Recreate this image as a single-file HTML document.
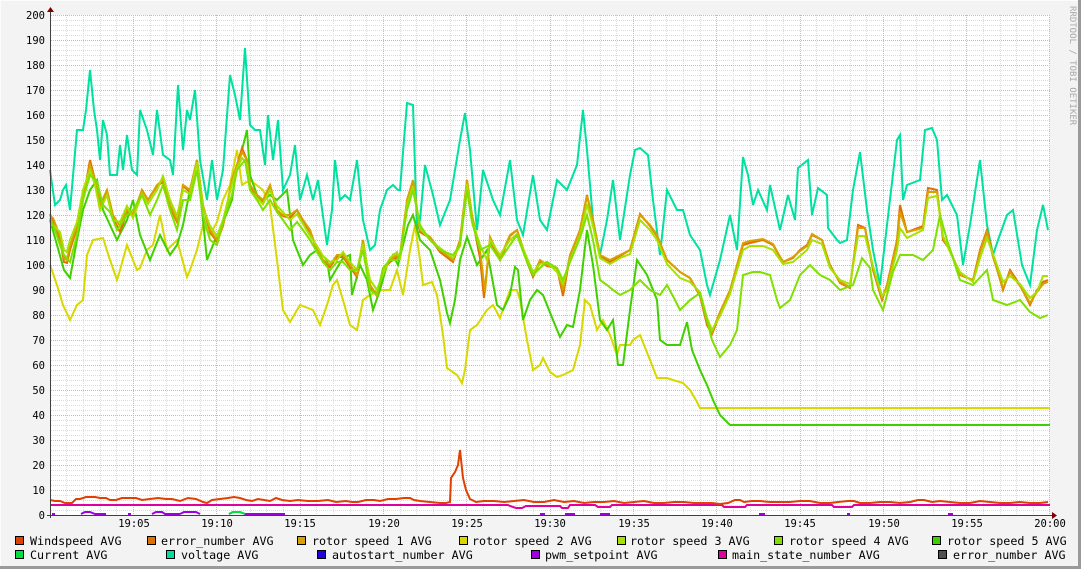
<!DOCTYPE html>
<html><head><meta charset="utf-8"><style>
html,body{margin:0;padding:0;}
body{width:1081px;height:569px;background:#f3f3f3;position:relative;overflow:hidden;font-family:"DejaVu Sans Mono","Liberation Mono",monospace;}
svg{position:absolute;left:0;top:0;}
</style></head><body>
<svg width="1081" height="569" viewBox="0 0 1081 569" xmlns="http://www.w3.org/2000/svg">
<defs>
<pattern id="hmin" x="0" y="0" width="1000" height="5" patternUnits="userSpaceOnUse"><line x1="0" y1="0.5" x2="1000" y2="0.5" stroke="#d8d8d8" stroke-width="1" stroke-dasharray="1,1"/></pattern>
</defs>
<rect x="0" y="0" width="1081" height="569" fill="#f3f3f3"/>
<line x1="0" y1="0.5" x2="1081" y2="0.5" stroke="#fcfcfc"/>
<line x1="0.5" y1="0" x2="0.5" y2="569" stroke="#fcfcfc"/>
<line x1="0" y1="567.5" x2="1081" y2="567.5" stroke="#9a9a9a" stroke-width="3"/>
<line x1="1079.5" y1="0" x2="1079.5" y2="569" stroke="#9a9a9a" stroke-width="3"/>
<rect x="51" y="15" width="999" height="500" fill="#ffffff"/>
<g id="grid" stroke-dasharray="1,1" stroke-width="1">
<g stroke="#dcdcdc">
<path d="M51 20.5H1050M51 25.5H1050M51 30.5H1050M51 35.5H1050M51 45.5H1050M51 50.5H1050M51 55.5H1050M51 60.5H1050M51 70.5H1050M51 75.5H1050M51 80.5H1050M51 85.5H1050M51 95.5H1050M51 100.5H1050M51 105.5H1050M51 110.5H1050M51 120.5H1050M51 125.5H1050M51 130.5H1050M51 135.5H1050M51 145.5H1050M51 150.5H1050M51 155.5H1050M51 160.5H1050M51 170.5H1050M51 175.5H1050M51 180.5H1050M51 185.5H1050M51 195.5H1050M51 200.5H1050M51 205.5H1050M51 210.5H1050M51 220.5H1050M51 225.5H1050M51 230.5H1050M51 235.5H1050M51 245.5H1050M51 250.5H1050M51 255.5H1050M51 260.5H1050M51 270.5H1050M51 275.5H1050M51 280.5H1050M51 285.5H1050M51 295.5H1050M51 300.5H1050M51 305.5H1050M51 310.5H1050M51 320.5H1050M51 325.5H1050M51 330.5H1050M51 335.5H1050M51 345.5H1050M51 350.5H1050M51 355.5H1050M51 360.5H1050M51 370.5H1050M51 375.5H1050M51 380.5H1050M51 385.5H1050M51 395.5H1050M51 400.5H1050M51 405.5H1050M51 410.5H1050M51 420.5H1050M51 425.5H1050M51 430.5H1050M51 435.5H1050M51 445.5H1050M51 450.5H1050M51 455.5H1050M51 460.5H1050M51 470.5H1050M51 475.5H1050M51 480.5H1050M51 485.5H1050M51 495.5H1050M51 500.5H1050M51 505.5H1050M51 510.5H1050"/>
<path d="M66.5 15V515M83.5 15V515M100.5 15V515M116.5 15V515M150.5 15V515M166.5 15V515M183.5 15V515M200.5 15V515M233.5 15V515M250.5 15V515M266.5 15V515M283.5 15V515M316.5 15V515M333.5 15V515M350.5 15V515M366.5 15V515M400.5 15V515M416.5 15V515M433.5 15V515M450.5 15V515M483.5 15V515M500.5 15V515M516.5 15V515M533.5 15V515M566.5 15V515M583.5 15V515M600.5 15V515M616.5 15V515M650.5 15V515M666.5 15V515M683.5 15V515M700.5 15V515M733.5 15V515M750.5 15V515M766.5 15V515M783.5 15V515M816.5 15V515M833.5 15V515M850.5 15V515M866.5 15V515M900.5 15V515M916.5 15V515M933.5 15V515M950.5 15V515M983.5 15V515M1000.5 15V515M1016.5 15V515M1033.5 15V515"/>
</g>
<g stroke="#f0a8a8">
<path d="M51 15.5H1050M51 40.5H1050M51 65.5H1050M51 90.5H1050M51 115.5H1050M51 140.5H1050M51 165.5H1050M51 190.5H1050M51 215.5H1050M51 240.5H1050M51 265.5H1050M51 290.5H1050M51 315.5H1050M51 340.5H1050M51 365.5H1050M51 390.5H1050M51 415.5H1050M51 440.5H1050M51 465.5H1050M51 490.5H1050"/>
<path d="M133.5 15V515M216.5 15V515M300.5 15V515M383.5 15V515M466.5 15V515M550.5 15V515M633.5 15V515M716.5 15V515M800.5 15V515M883.5 15V515M966.5 15V515M1049.5 15V515"/>
</g>
</g>
<g fill="none" stroke-width="2" stroke-linejoin="miter">
<!-- rotor speed 2 (yellow) -->
<polyline stroke="#d8d800" points="50,265 57,285 63,305 70,320 77,305 83,300 87,255 93,240 103,238 110,260 117,280 120,270 127,245 137,270 140,268 147,250 153,245 160,215 167,250 177,240 187,277 190,270 197,250 203,225 210,235 217,222 223,200 230,185 237,150 242,185 250,180 263,190 270,205 277,260 283,310 290,322 300,305 313,310 320,325 327,305 333,285 337,280 343,300 350,325 357,330 363,300 370,295 380,290 390,290 397,270 403,295 410,250 415,225 420,260 423,285 432,282 437,295 443,335 447,368 457,375 462,383 465,370 470,330 477,325 487,310 493,305 500,318 510,290 517,290 520,300 527,340 533,370 540,365 543,358 550,372 557,377 563,375 573,370 580,345 585,300 590,305 597,330 603,320 610,335 617,355 620,345 630,345 633,340 640,335 650,360 657,378 667,378 673,380 683,383 690,390 697,402 700,408 1050,408"/>
<!-- voltage -->
<polyline stroke="#00e0a0" points="50,170 55,205 60,200 63,190 66,185 70,210 77,130 83,130 86,110 90,70 94,110 97,130 100,160 103,120 107,135 110,175 117,175 120,145 123,170 127,135 132,170 137,175 140,110 147,130 153,155 157,110 163,155 170,160 173,175 178,85 183,150 187,110 190,120 195,90 200,160 207,200 212,160 217,200 223,170 230,75 235,95 240,120 245,48 250,125 255,130 260,130 265,165 268,115 273,160 278,120 283,190 290,175 295,145 300,200 307,175 313,200 318,180 327,245 332,210 335,160 340,200 345,195 350,200 357,160 363,220 370,250 375,245 380,210 387,190 393,185 398,190 400,190 404,140 407,103 413,105 417,230 420,220 425,165 433,195 440,225 450,200 460,140 465,113 470,150 477,230 483,170 493,200 500,215 510,160 517,220 523,235 533,175 540,220 547,230 557,180 567,190 577,165 583,110 587,150 593,220 600,255 607,220 613,180 620,240 630,175 635,150 640,148 648,155 653,200 660,255 667,190 677,210 683,210 690,235 700,250 707,285 710,295 720,260 730,215 737,250 743,157 748,175 753,205 758,190 767,210 770,185 780,230 788,195 795,220 798,168 808,160 812,215 818,188 827,195 828,228 837,240 840,243 847,240 853,190 860,152 867,210 873,250 880,285 887,225 897,140 900,135 903,200 907,185 920,180 925,130 932,128 937,140 942,200 947,195 957,215 963,265 970,225 980,160 987,225 993,255 998,240 1007,215 1013,210 1022,265 1030,285 1037,230 1043,205 1048,230"/>
<!-- rotor speed 5 (green) -->
<polyline stroke="#40d000" points="50,220 57,245 64,270 70,278 77,240 83,210 90,190 97,180 103,210 110,225 117,240 127,220 133,200 140,235 150,260 160,235 170,255 177,245 183,225 190,190 197,160 203,220 207,260 213,245 220,230 232,200 237,165 242,150 247,130 250,175 257,195 263,200 270,195 277,200 287,190 293,240 303,265 310,255 317,250 327,260 330,280 337,268 343,258 350,255 352,295 360,265 367,280 373,310 380,290 387,265 393,255 398,265 403,245 408,225 413,215 420,240 430,250 440,280 447,313 450,323 455,300 460,260 467,237 477,265 487,250 497,305 503,310 510,295 515,267 518,270 523,320 530,300 537,290 543,295 553,320 560,337 567,325 573,327 580,290 587,230 593,265 600,320 607,330 613,320 618,365 623,365 630,310 637,260 647,275 657,300 660,340 667,345 680,345 687,322 692,350 700,370 707,385 713,400 720,415 730,425 1050,425"/>
<!-- error_number orange -->
<polyline stroke="#e07000" points="50,214 53,222 60,240 64,262 67,263 70,250 77,228 83,200 90,160 95,180 100,207 107,192 113,218 120,232 127,212 133,216 142,190 148,200 157,186 163,182 170,207 177,222 183,186 190,192 197,160 203,206 210,232 217,242 223,226 232,180 237,165 242,148 247,160 250,186 257,197 263,202 270,186 277,212 283,216 290,218 297,210 303,222 310,232 317,250 323,262 330,267 337,257 343,257 350,267 357,277 363,240 370,287 377,296 383,270 390,262 397,257 400,257 407,202 413,182 420,232 430,238 440,252 453,262 460,242 467,180 472,217 480,258 484,298 490,240 500,260 510,236 517,230 527,262 533,277 540,262 547,266 557,268 563,296 570,256 580,230 587,195 593,222 600,256 610,262 620,256 630,250 640,214 650,226 657,236 667,260 680,272 690,278 700,296 707,325 712,334 720,314 730,292 737,266 743,245 750,243 763,240 773,245 783,262 793,258 800,250 807,245 812,235 822,240 830,265 840,283 850,288 858,225 865,228 873,270 882,300 887,285 897,240 900,205 907,232 923,226 928,188 937,190 943,240 950,250 960,275 973,280 980,250 987,230 993,255 1003,290 1010,270 1020,285 1030,305 1037,290 1043,282 1048,280"/>
<!-- rotor speed 1 -->
<polyline stroke="#d8a000" points="50,216 53,218 60,236 64,258 67,260 70,246 77,226 83,196 90,165 95,180 100,205 107,190 113,215 120,226 127,210 133,214 142,190 148,200 157,185 163,180 170,205 177,220 183,185 190,190 197,160 203,205 210,230 217,240 223,225 232,180 237,165 242,152 247,160 250,185 257,195 263,200 270,185 277,210 283,215 290,215 297,210 303,220 310,230 317,250 323,260 330,265 337,255 343,255 350,265 357,275 363,240 370,285 377,295 383,270 390,260 397,255 400,255 407,200 413,180 420,230 430,237 440,250 453,260 460,240 467,180 472,215 480,250 485,292 490,237 500,258 510,235 517,230 527,260 533,275 540,260 547,265 557,268 563,290 570,255 580,230 587,196 593,220 600,255 610,260 620,255 630,250 640,215 650,225 657,235 667,260 680,272 690,278 700,295 707,322 712,332 720,312 730,290 737,265 743,243 750,241 763,239 773,244 783,262 793,257 800,251 807,246 812,234 822,240 830,266 840,282 850,287 858,228 865,228 873,268 882,298 887,286 897,242 900,212 907,232 923,228 928,192 937,192 943,238 950,250 960,275 973,280 980,252 987,232 993,257 1003,288 1010,272 1020,286 1030,303 1037,292 1043,284 1048,282"/>
<!-- rotor speed 3 -->
<polyline stroke="#a8e000" points="50,225 53,225 60,232 64,250 67,252 70,240 77,222 83,190 90,170 95,185 100,210 107,195 113,220 120,222 127,206 133,218 142,194 148,204 157,190 163,176 170,200 177,216 183,190 190,194 197,162 203,208 210,226 217,236 223,220 232,184 237,168 242,158 247,164 250,190 257,198 263,204 270,190 277,206 283,212 290,220 297,214 303,224 310,236 317,246 323,256 330,262 337,260 343,252 350,262 357,270 363,244 370,280 377,290 383,274 390,258 397,252 400,260 407,205 413,186 420,228 430,240 440,248 453,258 460,246 467,184 472,220 480,245 487,260 490,240 500,255 510,240 517,234 527,258 533,272 540,264 547,262 557,272 563,284 570,260 580,236 587,204 593,226 600,258 610,264 620,258 630,254 640,220 650,230 657,240 667,264 680,278 690,282 700,292 707,318 712,330 720,316 730,294 737,270 743,250 750,246 763,246 773,250 783,264 793,262 800,256 807,250 812,240 822,244 830,268 840,280 850,284 858,236 865,236 873,266 882,296 887,290 897,250 900,228 907,238 923,230 928,198 937,196 943,236 950,252 960,272 973,282 980,258 987,238 993,254 1003,282 1010,276 1020,284 1030,298 1037,292 1043,276 1048,276"/>
<!-- rotor speed 4 -->
<polyline stroke="#80e000" points="50,218 55,230 60,245 64,255 70,262 77,235 83,200 90,175 97,182 103,205 110,212 117,230 127,215 133,210 142,195 150,215 157,200 163,185 170,210 177,230 183,200 190,200 197,170 203,215 210,240 217,245 223,222 232,195 237,170 245,160 250,190 257,200 263,210 270,200 277,212 283,220 290,230 297,222 303,230 310,240 317,252 323,262 330,270 337,262 343,262 350,270 357,270 363,250 370,290 377,295 383,268 390,260 397,260 400,255 407,210 413,190 420,225 430,240 440,250 453,255 460,245 467,190 472,222 480,250 490,245 500,260 510,245 517,235 527,262 533,275 540,268 547,262 557,268 563,280 570,262 580,238 587,215 593,240 600,280 607,285 613,290 620,295 630,290 640,280 650,290 660,295 667,285 675,300 680,310 690,300 700,293 707,320 712,340 720,357 730,345 737,330 743,275 753,272 760,272 770,275 777,300 780,308 790,300 800,275 810,265 820,275 830,280 840,290 853,285 862,258 870,268 873,290 883,310 893,272 900,255 913,255 923,260 933,250 940,215 947,240 960,280 973,285 987,270 993,300 1007,305 1020,300 1030,312 1040,318 1048,315"/>
<!-- main_state_number magenta -->
<polyline stroke="#e000a0" points="50,505 508,505 510,506 516,508 522,508 526,506 560,506 562,508 568,508 570,505 595,505 598,507 610,507 612,505 722,505 724,507 745,507 747,505 832,505 834,507 852,507 854,505 1050,505"/>
<!-- windspeed -->
<polyline stroke="#e04000" points="50,500 55,501 60,501 65,503 72,503 76,499 80,499 86,497 95,497 100,498 106,498 110,500 116,500 122,498 130,498 136,498 142,500 150,499 158,498 166,499 172,499 180,501 188,498 196,499 203,502 207,503 212,500 220,499 228,498 234,497 240,498 246,500 252,501 258,499 264,500 270,501 276,498 282,500 290,501 298,500 308,501 318,501 328,500 336,502 346,501 352,502 358,502 366,500 374,500 380,501 388,499 396,499 404,498 410,498 414,500 420,501 430,502 440,503 446,503 450,502 451,478 455,472 458,465 460,450 463,478 466,490 470,499 476,502 484,501 494,501 504,502 514,501 524,500 534,502 544,502 554,500 564,502 574,501 584,503 594,502 604,502 614,501 624,503 634,502 644,501 654,503 664,503 674,502 684,502 694,503 704,503 712,503 720,504 728,503 735,500 740,500 744,502 752,501 760,501 770,502 780,502 790,502 800,501 810,501 820,503 830,503 838,502 848,501 854,501 860,503 870,503 880,502 890,502 900,503 910,502 918,500 924,500 932,502 940,501 950,502 960,503 970,503 980,501 990,502 1000,503 1010,503 1020,502 1030,503 1040,503 1048,502"/>
<!-- pwm purple -->
<g stroke="#a000e0">
<path d="M52 514H55M81 514L85 512H90L95 514H106M128 514H131M152 514L156 512H162L165 514H180M180 514L184 512H196L200 514M229 514L233 512H240L245 514H285M540 514H545M565 514L570 514H575M600 514H610M759 514H765M847 514H850M948 514H953"/>
</g>
<path d="M229 514L233 512H240L245 514" stroke="#00e040"/>
</g>
<!-- axes -->
<line x1="47" y1="515.5" x2="1052" y2="515.5" stroke="#404040" stroke-width="1"/>
<polygon points="1052,512 1057,515.5 1052,519" fill="#800000"/>
<line x1="50.5" y1="518" x2="50.5" y2="10" stroke="#404040" stroke-width="1"/>
<polygon points="47,12 50.5,7 54,12" fill="#800000"/>
<g font-family="DejaVu Sans Mono, Liberation Mono, monospace" font-size="10.5" fill="#000">
<g text-anchor="end">
<text x="45" y="19">200</text><text x="45" y="44">190</text><text x="45" y="69">180</text><text x="45" y="94">170</text><text x="45" y="119">160</text><text x="45" y="144">150</text><text x="45" y="169">140</text><text x="45" y="194">130</text><text x="45" y="219">120</text><text x="45" y="244">110</text><text x="45" y="269">100</text><text x="45" y="294">90</text><text x="45" y="319">80</text><text x="45" y="344">70</text><text x="45" y="369">60</text><text x="45" y="394">50</text><text x="45" y="419">40</text><text x="45" y="444">30</text><text x="45" y="469">20</text><text x="45" y="494">10</text><text x="45" y="519">0</text>
</g>
<g text-anchor="middle">
<text x="134" y="527">19:05</text><text x="217" y="527">19:10</text><text x="300" y="527">19:15</text><text x="384" y="527">19:20</text><text x="467" y="527">19:25</text><text x="550" y="527">19:30</text><text x="634" y="527">19:35</text><text x="717" y="527">19:40</text><text x="800" y="527">19:45</text><text x="884" y="527">19:50</text><text x="967" y="527">19:55</text><text x="1050" y="527">20:00</text>
</g>
</g>
<text x="1070" y="6" transform="rotate(90 1070 6)" font-family="DejaVu Sans Mono, monospace" font-size="9" fill="#a8a8a8">RRDTOOL / TOBI OETIKER</text>
<!-- legend -->
<g stroke="#000" stroke-width="1">
<rect x="15.5" y="536.5" width="8" height="8" fill="#e04000"/>
<rect x="147.5" y="536.5" width="8" height="8" fill="#e07000"/>
<rect x="297.5" y="536.5" width="8" height="8" fill="#d8a000"/>
<rect x="459.5" y="536.5" width="8" height="8" fill="#d8d800"/>
<rect x="617.5" y="536.5" width="8" height="8" fill="#a8e000"/>
<rect x="774.5" y="536.5" width="8" height="8" fill="#80e000"/>
<rect x="932.5" y="536.5" width="8" height="8" fill="#40d000"/>
<rect x="15.5" y="550.5" width="8" height="8" fill="#00e040"/>
<rect x="166.5" y="550.5" width="8" height="8" fill="#00e0a0"/>
<rect x="317.5" y="550.5" width="8" height="8" fill="#2000e0"/>
<rect x="531.5" y="550.5" width="8" height="8" fill="#a000e0"/>
<rect x="718.5" y="550.5" width="8" height="8" fill="#e000a0"/>
<rect x="938.5" y="550.5" width="8" height="8" fill="#505050"/>
</g>
<g font-family="DejaVu Sans Mono, Liberation Mono, monospace" font-size="11.7" fill="#000">
<text x="30" y="545">Windspeed AVG</text>
<text x="161" y="545">error_number AVG</text>
<text x="312" y="545">rotor speed 1 AVG</text>
<text x="472" y="545">rotor speed 2 AVG</text>
<text x="630" y="545">rotor speed 3 AVG</text>
<text x="789" y="545">rotor speed 4 AVG</text>
<text x="947" y="545">rotor speed 5 AVG</text>
<text x="30" y="559">Current AVG</text>
<text x="181" y="559">voltage AVG</text>
<text x="332" y="559">autostart_number AVG</text>
<text x="545" y="559">pwm_setpoint AVG</text>
<text x="732" y="559">main_state_number AVG</text>
<text x="953" y="559">error_number AVG</text>
</g>
</svg>
</body></html>
